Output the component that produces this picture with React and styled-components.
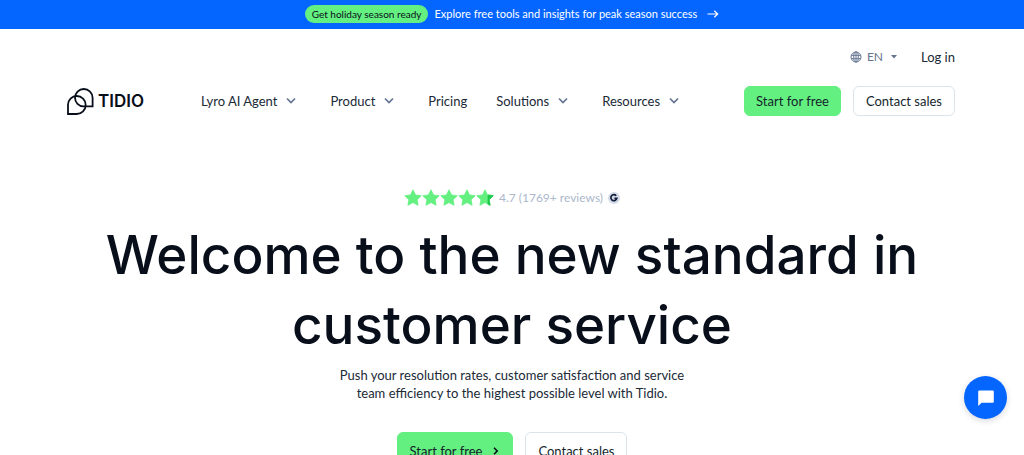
import styled, { createGlobalStyle } from "styled-components";

const navItems = [
  { label: "Lyro AI Agent", menu: true },
  { label: "Product", menu: true },
  { label: "Pricing", menu: false },
  { label: "Solutions", menu: true },
  { label: "Resources", menu: true },
];

export default function App() {
  return (
    <>
      <GlobalStyle />
      <Banner href="#holiday">
        <BannerTag>Get holiday season ready</BannerTag>
        <span>Explore free tools and insights for peak season success</span>
        <ArrowIcon />
      </Banner>
      <Header>
        <TopRow>
          <LanguageButton type="button" aria-label="Language">
            <GlobeIcon />
            <span>EN</span>
            <CaretIcon />
          </LanguageButton>
          <TextLink href="#login">Log in</TextLink>
        </TopRow>
        <MainRow>
          <Logo href="#home">
            <LogoMark />
            <span>TIDIO</span>
          </Logo>
          <Nav>
            {navItems.map((item) => (
              <NavItem key={item.label} item={item} />
            ))}
          </Nav>
          <Actions>
            <Button href="#register" $primary>
              Start for free
            </Button>
            <Button href="#sales">Contact sales</Button>
          </Actions>
        </MainRow>
      </Header>
      <Hero>
        <Rating />
        <Title>Welcome to the new standard in customer service</Title>
        <Lead>
          Push your resolution rates, customer satisfaction and service team
          efficiency to the highest possible level with Tidio.
        </Lead>
        <Actions>
          <Button href="#register" $primary $large>
            Start for free
            <ChevronRight />
          </Button>
          <Button href="#sales" $large>
            Contact sales
          </Button>
        </Actions>
      </Hero>
      <ChatButton type="button" aria-label="Open chat">
        <ChatIcon />
      </ChatButton>
    </>
  );
}

function NavItem({ item }) {
  if (!item.menu) {
    return <TextLink href="#pricing">{item.label}</TextLink>;
  }
  return (
    <NavButton type="button">
      {item.label}
      <ChevronDown />
    </NavButton>
  );
}

function Rating() {
  return (
    <RatingRow>
      <Stars>
        {[1, 1, 1, 1, 0.7].map((fill, index) => (
          <Star key={index} fill={fill} />
        ))}
      </Stars>
      <span>4.7 (1769+ reviews)</span>
      <G2Icon />
    </RatingRow>
  );
}

function Star({ fill }) {
  const shape =
    "M9 .8l2.5 5.1 5.7.8-4.1 4 1 5.6L9 13.6l-5.1 2.7 1-5.6-4.1-4 5.7-.8z";
  return (
    <svg width="18" height="18" viewBox="0 0 18 18" aria-hidden="true">
      <path
        d={shape}
        fill="#64ef81"
        stroke="#64ef81"
        strokeWidth="0.8"
        strokeLinejoin="round"
      />
      {fill < 1 && (
        <path
          d="M12 6l5.2.7-4.1 4 1 5.6-2.1-1.1z"
          fill="#1fc94b"
          stroke="#1fc94b"
          strokeWidth="0.8"
        />
      )}
    </svg>
  );
}

function G2Icon() {
  return (
    <svg width="12" height="12" viewBox="0 0 12 12" aria-hidden="true">
      <circle cx="6" cy="6" r="6" fill="#d5dce7" />
      <path
        d="M8.2 3.8A3 3 0 1 0 8.8 6.4H6.4"
        fill="none"
        stroke="#141f3d"
        strokeWidth="1.7"
      />
    </svg>
  );
}

function LogoMark() {
  return (
    <svg width="27" height="27" viewBox="0 0 27 27" aria-hidden="true">
      <g fill="none" stroke="#080f1a" strokeWidth="1.8">
        <path d="M1 26V16.7A8.7 8.7 0 0 1 9.7 8a9 9 0 0 1 9 9 9 9 0 0 1-9 9z" />
        <path d="M25.6 18.3V9.8A8.8 8.8 0 0 0 16.8 1 8.8 8.8 0 0 0 8 9.8a8.5 8.5 0 0 0 8.5 8.5z" />
      </g>
    </svg>
  );
}

function GlobeIcon() {
  return (
    <svg width="12" height="12" viewBox="0 0 12 12" aria-hidden="true">
      <g fill="none" stroke="#647491" strokeWidth="1">
        <circle cx="6" cy="6" r="5" />
        <ellipse cx="6" cy="6" rx="2.3" ry="5" />
        <path d="M1.4 4.3h9.2M1.4 7.7h9.2M6 1v10" />
      </g>
    </svg>
  );
}

function CaretIcon() {
  return (
    <svg width="6" height="4" viewBox="0 0 6 4" aria-hidden="true">
      <path d="M0 0h6L3 3.6z" fill="#647491" />
    </svg>
  );
}

function ChevronDown() {
  return (
    <svg width="20" height="20" viewBox="0 0 20 20" aria-hidden="true">
      <path
        d="M6 7.5l4 4 4-4"
        fill="none"
        stroke="#647491"
        strokeWidth="1.7"
      />
    </svg>
  );
}

function ChevronRight() {
  return (
    <svg width="8" height="10" viewBox="0 0 8 10" aria-hidden="true">
      <path
        d="M2 1.8L5.2 5 2 8.2"
        fill="none"
        stroke="#080f1a"
        strokeWidth="1.6"
      />
    </svg>
  );
}

function ArrowIcon() {
  return (
    <svg width="12" height="10" viewBox="0 0 12 10" aria-hidden="true">
      <path
        d="M.5 5h10M7.3 1.8L10.7 5 7.3 8.2"
        fill="none"
        stroke="#ffffff"
        strokeWidth="1.2"
      />
    </svg>
  );
}

function ChatIcon() {
  return (
    <svg width="18" height="18" viewBox="0 0 18 18" aria-hidden="true">
      <path
        d="M2.2 1.5h13.6a1 1 0 0 1 1 1v10.2a1 1 0 0 1-1 1H4.6L1.2 17V2.5a1 1 0 0 1 1-1z"
        fill="#ffffff"
      />
    </svg>
  );
}

const GlobalStyle = createGlobalStyle`
  * {
    box-sizing: border-box;
  }

  body {
    margin: 0;
    background-color: #ffffff;
    color: #202a36;
    font-family: Lato, "Liberation Sans", sans-serif;
    font-size: 13px;
    line-height: 18px;
  }

  svg {
    display: block;
    flex-shrink: 0;
  }

  button {
    padding: 0;
    border: none;
    background: none;
    color: inherit;
    font: inherit;
    cursor: pointer;
  }

  a {
    color: inherit;
    text-decoration: none;
  }
`;

const Banner = styled.a`
  display: flex;
  align-items: center;
  justify-content: center;
  gap: 6px;
  height: 29px;
  padding-bottom: 1px;
  background-color: #0566ff;
  color: #ffffff;
  font-size: 11px;

  svg {
    margin-left: 4px;
  }
`;

const BannerTag = styled.span`
  padding: 0 7px;
  border-radius: 9px;
  background-color: #64ef81;
  color: #080f1a;
  font-size: 10px;
`;

const Header = styled.header`
  padding: 19px 69px 0 67px;
`;

const TopRow = styled.div`
  display: flex;
  align-items: center;
  justify-content: flex-end;
  gap: 24px;
`;

const LanguageButton = styled.button`
  display: flex;
  align-items: center;
  color: #647491;
  font-size: 12px;

  span {
    margin: 0 8px 0 5px;
  }
`;

const TextLink = styled.a`
  white-space: nowrap;
`;

const MainRow = styled.div`
  display: flex;
  align-items: center;
  margin-top: 20px;
`;

const Logo = styled.a`
  display: flex;
  align-items: center;
  gap: 4px;
  width: 134px;
  color: #080f1a;
  font-family: Inter, "Liberation Sans", sans-serif;
  font-size: 17px;
  font-weight: 600;
`;

const Nav = styled.nav`
  display: flex;
  flex: 1;
  align-items: center;
  gap: 29px;
`;

const NavButton = styled.button`
  display: flex;
  align-items: center;
  gap: 4px;
  white-space: nowrap;
`;

const Actions = styled.div`
  display: flex;
  gap: 12px;
`;

const Button = styled.a`
  display: flex;
  align-items: center;
  justify-content: center;
  gap: 10px;
  height: ${(props) => (props.$large ? "38px" : "30px")};
  padding: 0 ${(props) => (props.$primary && !props.$large ? "11px" : "12px")};
  border: 1px solid ${(props) => (props.$primary ? "#64ef81" : "#dce3ec")};
  border-radius: 6px;
  background-color: ${(props) => (props.$primary ? "#64ef81" : "#ffffff")};
  color: #141f2b;
  white-space: nowrap;
`;

const Hero = styled.main`
  display: flex;
  flex-direction: column;
  align-items: center;
  padding: 73px 67px 40px;
`;

const RatingRow = styled.div`
  display: flex;
  align-items: center;
  gap: 5px;
  color: #acb8cb;
  font-size: 12px;
`;

const Stars = styled.div`
  display: flex;
`;

const Title = styled.h1`
  max-width: 860px;
  margin: 13px 0 6px;
  color: #080f1a;
  font-family: Inter, "Liberation Sans", sans-serif;
  font-size: 53px;
  font-weight: 500;
  line-height: 70px;
  text-align: center;
`;

const Lead = styled.p`
  max-width: 360px;
  margin: 0 0 30px;
  text-align: center;
`;

const ChatButton = styled.button`
  position: fixed;
  right: 17px;
  bottom: 36px;
  display: flex;
  align-items: center;
  justify-content: center;
  width: 43px;
  height: 43px;
  border-radius: 50%;
  background-color: #0566ff;
  box-shadow: 0 2px 6px rgba(0, 18, 46, 0.16);
`;
